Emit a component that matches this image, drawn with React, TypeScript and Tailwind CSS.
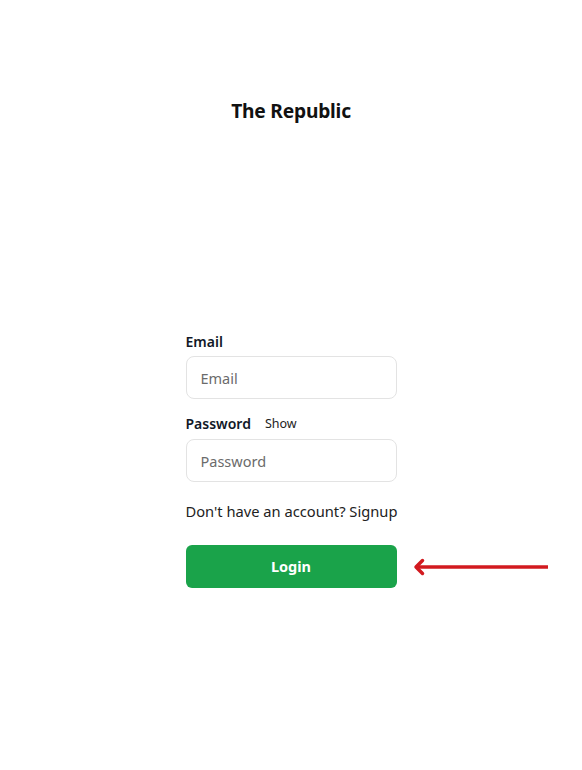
import React from "react";

export default function App() {
  return (
    <div
      className="relative min-h-[770px] w-full bg-white text-[#111111]"
      style={{ fontFamily: '"Noto Sans", "Open Sans", sans-serif' }}
    >
      <div className="flex flex-col items-center pt-[97px]">
        <h1 className="text-[19.2px] font-bold leading-[28px] tracking-[-0.2px]">The Republic</h1>
      </div>
      <div className="mx-auto mt-[207px] flex w-[211px] flex-col">
        <label className="text-[14px] font-semibold leading-[20px] text-[#111827]">Email</label>
        <input
          placeholder="Email"
          className="mt-[4px] h-[43px] w-full rounded-[8px] border border-[#e3e3e3] px-[14px] text-[14.5px] text-[#111] outline-none placeholder:text-[#6b6b6b]"
        />
        <div className="mt-[15px] flex items-center gap-[14px]">
          <span className="text-[14px] font-semibold leading-[20px] text-[#111827]">Password</span>
          <span className="text-[12.5px] leading-[20px] text-[#222]">Show</span>
        </div>
        <input
          placeholder="Password"
          type="password"
          className="mt-[5px] h-[43px] w-full rounded-[8px] border border-[#e3e3e3] px-[14px] text-[14.5px] text-[#111] outline-none placeholder:text-[#6b6b6b]"
        />
        <p className="mt-[19px] whitespace-nowrap text-[14.7px] leading-[20px] text-[#222]">
          Don't have an account? Signup
        </p>
        <div className="relative mt-[24px]">
          <button className="h-[43px] w-full rounded-[6px] bg-[#1aa34a] text-[14.5px] font-bold text-white">
            Login
          </button>
          <svg
            className="absolute left-[226px] top-[13px]"
            width="138"
            height="18"
            viewBox="0 0 138 18"
            fill="none"
          >
            <path d="M136 9H4" stroke="#d21a1f" strokeWidth="3.5" />
            <path d="M10.5 2.5L4 9L10.5 15.5" stroke="#d21a1f" strokeWidth="3.5" strokeLinecap="round" strokeLinejoin="round" />
          </svg>
        </div>
      </div>
    </div>
  );
}
